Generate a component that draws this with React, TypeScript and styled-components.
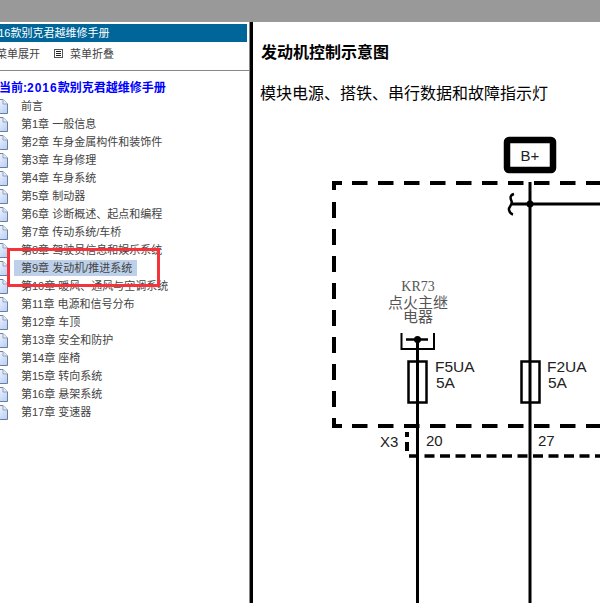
import styled, { createGlobalStyle } from "styled-components";

const GlobalStyle = createGlobalStyle`
    html, body {
        margin: 0;
        padding: 0;
        height: 100%;
        overflow: hidden;
        background: #fff;
    }
    #root {
        height: 100%;
    }
`;

const FONT = `"Liberation Sans", "Noto Sans CJK SC", sans-serif`;

const Page = styled.div`
    position: relative;
    height: 100%;
    display: flex;
    flex-direction: column;
    font-family: ${FONT};
`;

const TopBar = styled.div`
    height: 22px;
    flex: none;
    background-color: #999;
`;

const Frames = styled.div`
    flex: 1;
    min-height: 0;
    display: flex;
`;

const Side = styled.aside`
    width: 250px;
    flex: none;
    box-sizing: border-box;
    overflow: hidden;
    border-right: 1px solid #888;
`;

// the frame is scrolled sideways, so the left edge of everything is cut off
const SideInner = styled.div`
    margin-left: -16px;
    width: 265px;
    padding-top: 2px;
`;

const BookTitle = styled.div`
    height: 18px;
    line-height: 18px;
    margin-right: 2px;
    padding-left: 2px;
    background-color: #006699;
    color: #fff;
    font-size: 11px;
`;

const Toolbar = styled.div`
    height: 22px;
    padding-left: 12px;
    display: flex;
    align-items: center;
    color: #444;
    font-size: 11px;
`;

const ToolLabel = styled.span`
    margin-left: ${(props: { $gap?: number }) => props.$gap ?? 0}px;
`;

const Rule = styled.hr`
    height: 1px;
    margin: 6px 0 0 0;
    border: 0;
    border-top: 1px solid #888;
`;

const Current = styled.div`
    margin-top: 8px;
    height: 17px;
    line-height: 17px;
    padding-left: 15px;
    color: #0000ff;
    font-size: 12px;
    font-weight: bold;
`;

const Year = styled.span`
    letter-spacing: 1px;
`;

const ChapterList = styled.ul`
    list-style: none;
    margin: 0;
    padding: 0 0 0 10px;
`;

const Chapter = styled.li`
    height: 18px;
    display: flex;
    align-items: center;
`;

const Label = styled.span<{ $active?: boolean }>`
    margin-left: 6px;
    padding: 0 5px 0 7px;
    height: 16px;
    line-height: 16px;
    font-size: 11px;
    color: #444;
    white-space: nowrap;
    background-color: ${(props) => (props.$active ? "#bdd0ea" : "transparent")};
`;

const Main = styled.main`
    flex: 1;
    min-width: 0;
    overflow: hidden;
    border-left: 3px solid #000;
`;

const Heading = styled.h3`
    margin: 21px 0 0 8px;
    font-size: 16px;
    line-height: 20px;
    font-weight: bold;
    color: #000;
`;

const Subtitle = styled.p`
    margin: 21px 0 0 7px;
    font-size: 16px;
    line-height: 20px;
    color: #000;
`;

const Diagram = styled.svg`
    display: block;
    margin-top: 16px;
`;

const Annotation = styled.div`
    position: absolute;
    left: 7px;
    top: 248px;
    width: 153px;
    height: 39px;
    box-sizing: border-box;
    border: 3px solid #f4343a;
`;

const chapters = [
    "前言",
    "第1章 一般信息",
    "第2章 车身金属构件和装饰件",
    "第3章 车身修理",
    "第4章 车身系统",
    "第5章 制动器",
    "第6章 诊断概述、起点和编程",
    "第7章 传动系统/车桥",
    "第8章 驾驶员信息和娱乐系统",
    "第9章 发动机/推进系统",
    "第10章 暖风、通风与空调系统",
    "第11章 电源和信号分布",
    "第12章 车顶",
    "第13章 安全和防护",
    "第14章 座椅",
    "第15章 转向系统",
    "第16章 悬架系统",
    "第17章 变速器",
];

function PageIcon({ id }: { id: string }) {
    return (
        <svg width="14" height="15" viewBox="0 0 14 15" style={{ flex: "none" }}>
            <defs>
                <linearGradient id={id} x1="0" y1="0" x2="1" y2="1">
                    <stop offset="0" stopColor="#ffffff" />
                    <stop offset="1" stopColor="#b4ccf4" />
                </linearGradient>
            </defs>
            <path d="M0.5 0.5H9L13.5 5V14.5H0.5Z" fill={`url(#${id})`} stroke="#6c7da3" />
            <path d="M9 0.5V5H13.5" fill="#e4edfb" stroke="#8fa0c0" />
        </svg>
    );
}

function CollapseIcon() {
    return (
        <svg width="9" height="9" viewBox="0 0 9 9" style={{ marginLeft: 14, flex: "none" }}>
            <rect x="0.5" y="0.5" width="8" height="8" fill="#fff" stroke="#555" />
            <path d="M2 2.5H7M2 4.5H7M2 6.5H7" stroke="#222" strokeWidth="1" />
        </svg>
    );
}

function Wiring() {
    return (
        <Diagram width="347" height="483" viewBox="253 120 347 483">
            <g fill="none" stroke="#000">
                {/* B+ terminal */}
                <rect x="507" y="140" width="46" height="30" rx="2" strokeWidth="6.5" />

                {/* outer housing */}
                <path d="M334 190V183H342" strokeWidth="4" />
                <path d="M352 183H600" strokeWidth="4" strokeDasharray="15.5 10.5" />
                <path d="M334 202V408" strokeWidth="4" strokeDasharray="16 11" />
                <path d="M334 418V426H342" strokeWidth="4" />
                <path d="M352 426H600" strokeWidth="4" strokeDasharray="15.5 10.5" />

                {/* X3 connector */}
                <path d="M407 432V451" strokeWidth="4" strokeDasharray="5 5 9 100" />
                <path d="M409 456H600" strokeWidth="3.5" strokeDasharray="10 5.5" />

                {/* wires */}
                <path d="M530 182V603" strokeWidth="3" />
                <path d="M417.5 339V603" strokeWidth="3" />
                <path d="M511 204H600" strokeWidth="3" />
                <path d="M514 194C510 195 510 198 511.5 201C513 205 508 207 509 210C509.5 212 511 214 513 214.5" strokeWidth="2.5" />

                {/* relay contact */}
                <path d="M401.5 333V349H434V333" strokeWidth="2" />
                <path d="M406 339.5H428" strokeWidth="2.5" />

                {/* fuses */}
                <rect x="408.5" y="361.5" width="18" height="41" strokeWidth="2.5" />
                <rect x="521.5" y="361.5" width="18" height="41" strokeWidth="2.5" />
            </g>
            <circle cx="530" cy="204" r="3.5" fill="#000" />
            <circle cx="417.5" cy="339.5" r="3.5" fill="#000" />

            <g fontFamily={`"Liberation Sans", sans-serif`} fill="#222">
                <text x="530" y="160.5" fontSize="15" textAnchor="middle">B+</text>
                <text x="435" y="372" fontSize="15.5">F5UA</text>
                <text x="436" y="388" fontSize="15.5">5A</text>
                <text x="547" y="372" fontSize="15.5">F2UA</text>
                <text x="548" y="388" fontSize="15.5">5A</text>
                <text x="380" y="447" fontSize="15">X3</text>
                <text x="426" y="446" fontSize="15">20</text>
                <text x="538" y="446" fontSize="15">27</text>
            </g>
            <g fontFamily={`"Liberation Serif", "Noto Sans CJK SC", serif`} fill="#555" textAnchor="middle">
                <text x="418" y="291" fontSize="14">KR73</text>
                <text x="418" y="308" fontSize="15">点火主继</text>
                <text x="418" y="322" fontSize="15">电器</text>
            </g>
        </Diagram>
    );
}

export default function App() {
    return (
        <Page>
            <GlobalStyle />
            <TopBar />
            <Frames>
                <Side>
                    <SideInner>
                        <BookTitle>2016款别克君越维修手册</BookTitle>
                        <Toolbar>
                            <ToolLabel>菜单展开</ToolLabel>
                            <CollapseIcon />
                            <ToolLabel $gap={7}>菜单折叠</ToolLabel>
                        </Toolbar>
                        <Rule />
                        <Current>
                            当前:<Year>2016</Year>款别克君越维修手册
                        </Current>
                        <ChapterList>
                            {chapters.map((name, i) => (
                                <Chapter key={name}>
                                    <PageIcon id={`page-${i}`} />
                                    <Label $active={i === 9}>{name}</Label>
                                </Chapter>
                            ))}
                        </ChapterList>
                    </SideInner>
                </Side>
                <Main>
                    <Heading>发动机控制示意图</Heading>
                    <Subtitle>模块电源、搭铁、串行数据和故障指示灯</Subtitle>
                    <Wiring />
                </Main>
            </Frames>
            <Annotation />
        </Page>
    );
}
